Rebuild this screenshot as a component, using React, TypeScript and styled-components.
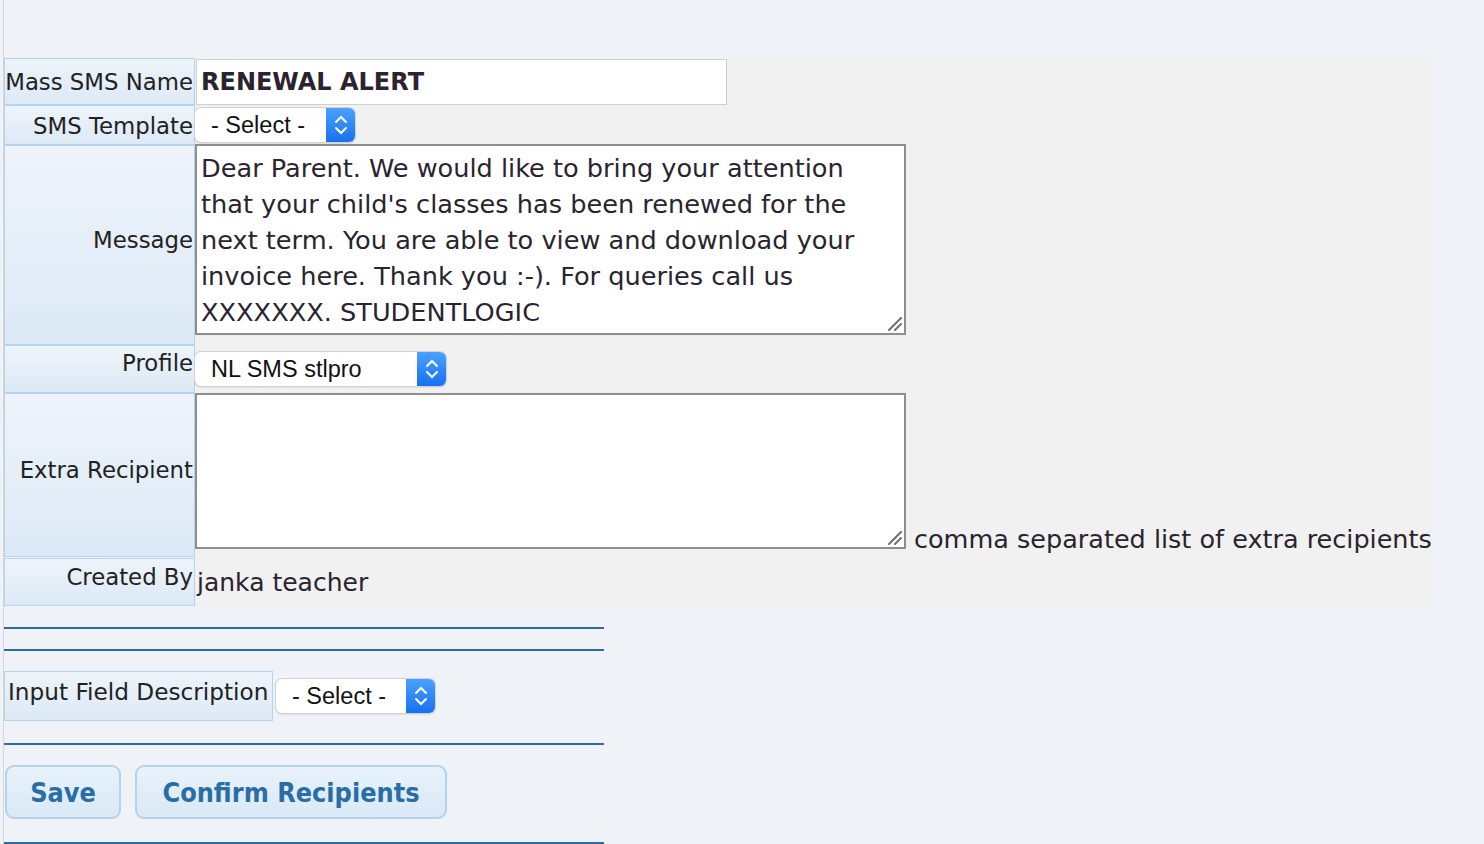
import React from 'react';
import styled, { createGlobalStyle } from 'styled-components';

const GlobalStyle = createGlobalStyle`
  html, body {
    margin: 0;
    padding: 0;
    background: #eff3f7;
  }
  body {
    font-family: "DejaVu Sans", "Liberation Sans", sans-serif;
    color: #2b2330;
  }
`;

const Page = styled.div`
  min-height: 844px;
  margin-left: 3px;
  border-left: 1px solid #d6d6d6;
  padding-top: 58px;
  box-sizing: border-box;
`;

const FormTable = styled.div`
  display: grid;
  grid-template-columns: 191px 1fr;
  width: 1428px;
  background: #f1f1f1;
`;

// $off moves the label text away from the vertical middle (negative = up)
const Label = styled.div<{ $h: number; $off?: number }>`
  height: ${(p) => p.$h}px;
  box-sizing: border-box;
  border: 1px solid #b3d3ee;
  background: linear-gradient(#eef4fa, #dce9f6);
  display: flex;
  align-items: center;
  justify-content: flex-end;
  padding-right: 1px;
  padding-top: ${(p) => Math.max(0, 2 * (p.$off || 0))}px;
  padding-bottom: ${(p) => Math.max(0, -2 * (p.$off || 0))}px;
  font-size: 22.8px;
  color: #222;
  white-space: nowrap;
`;

const WideLabel = styled(Label)`
  width: 269px;
  justify-content: flex-start;
  padding-left: 3px;
  font-size: 23.2px;
`;

const Value = styled.div<{ $align?: string }>`
  display: flex;
  align-items: ${(p) => p.$align || 'center'};
  gap: 8px;
`;

const TextInput = styled.input`
  width: 531px;
  height: 46px;
  box-sizing: border-box;
  margin-left: 1px;
  border: 1px solid #d0d0d0;
  background: #fff;
  padding: 0 4px;
  font-family: "DejaVu Sans", sans-serif;
  font-size: 24px;
  font-weight: bold;
  color: #2b2330;
  outline: none;
`;

const AreaWrap = styled.div`
  position: relative;
  display: flex;
`;

const TextArea = styled.textarea<{ $h: number }>`
  width: 711px;
  height: ${(p) => p.$h}px;
  box-sizing: border-box;
  border: 2px solid #8e8e8e;
  background: #fff;
  padding: 4px 4px;
  font-family: "DejaVu Sans", sans-serif;
  font-size: 25.6px;
  line-height: 36px;
  color: #2b2330;
  resize: none;
  outline: none;
`;

const Grip = styled.svg`
  position: absolute;
  right: 4px;
  bottom: 4px;
  pointer-events: none;
`;

const SelectBox = styled.div<{ $w: number }>`
  width: ${(p) => p.$w}px;
  height: 34px;
  box-sizing: border-box;
  display: flex;
  align-items: stretch;
  background: #fff;
  border-radius: 6px;
  box-shadow: 0 0 0 1px #d2d2d2, 0 1px 2px rgba(0, 0, 0, 0.25);
  overflow: hidden;
  font-family: "Liberation Sans", Arial, sans-serif;
  font-size: 23.5px;
  color: #111;
`;

const SelectText = styled.span`
  flex: 1;
  display: flex;
  align-items: center;
  padding-left: 16px;
  white-space: pre;
`;

const SelectArrow = styled.span`
  width: 29px;
  display: flex;
  align-items: center;
  justify-content: center;
  background: linear-gradient(#4aa1ff, #1771f0);
`;

const Hint = styled.span`
  font-size: 25.5px;
  line-height: 26px;
  padding-bottom: 6px;
  white-space: nowrap;
`;

const Plain = styled.span`
  font-size: 25px;
  padding-left: 2px;
`;

const Rule = styled.hr<{ $top: number }>`
  width: 600px;
  margin: ${(p) => p.$top}px 0 0;
  border: 0;
  border-top: 2px solid #2c6ba4;
`;

const Lower = styled.div`
  display: flex;
  flex-direction: column;
`;

const FieldRow = styled.div`
  display: flex;
  align-items: center;
  gap: 3px;
  margin-top: 20px;
`;

const ButtonRow = styled.div`
  display: flex;
  gap: 14px;
  margin: 20px 0 0 1px;
`;

const Button = styled.button<{ $w: number }>`
  width: ${(p) => p.$w}px;
  height: 54px;
  border: 2px solid #b2d2ee;
  border-radius: 9px;
  background: linear-gradient(#e8f2fb, #d9e9f6);
  font-family: "DejaVu Sans Condensed", "DejaVu Sans", sans-serif;
  font-weight: bold;
  font-size: 26.8px;
  color: #2a6da6;
  cursor: pointer;
`;

const Chevrons = () => (
  <svg width="16" height="26" viewBox="0 0 16 26">
    <path d="M3 10 L8 5 L13 10" fill="none" stroke="#fff" strokeWidth="2" strokeLinecap="round" />
    <path d="M3 16 L8 21 L13 16" fill="none" stroke="#fff" strokeWidth="2" strokeLinecap="round" />
  </svg>
);

const Select = ({ w, text }: { w: number; text: string }) => (
  <SelectBox $w={w}>
    <SelectText>{text}</SelectText>
    <SelectArrow>
      <Chevrons />
    </SelectArrow>
  </SelectBox>
);

const Area = ({ h, value, style }: { h: number; value?: string; style?: React.CSSProperties }) => (
  <AreaWrap style={style}>
    <TextArea $h={h} defaultValue={value} />
    <Grip width="14" height="14" viewBox="0 0 14 14">
      <path d="M1 13 L13 1 M7 13 L13 7" stroke="#6f6f6f" strokeWidth="2" strokeLinecap="round" />
    </Grip>
  </AreaWrap>
);

const message =
  "Dear Parent. We would like to bring your attention\nthat your child's classes has been renewed for the\nnext term. You are able to view and download your\ninvoice here. Thank you :-). For queries call us\nXXXXXXX. STUDENTLOGIC";

export default function App() {
  return (
    <Page>
      <GlobalStyle />
      <FormTable>
        <Label $h={47} $off={0}>Mass SMS Name</Label>
        <Value>
          <TextInput defaultValue="RENEWAL ALERT" />
        </Value>

        <Label $h={40} $off={1}>SMS Template</Label>
        <Value>
          <Select w={160} text="- Select -" />
        </Value>

        <Label $h={200} $off={-5}>Message</Label>
        <Value $align="flex-start">
          <Area h={191} value={message} style={{ marginTop: -1 }} />
        </Value>

        <Label $h={48} $off={-6}>Profile</Label>
        <Value>
          <Select w={251} text="NL SMS stlpro" />
        </Value>

        <Label $h={164} $off={-5}>Extra Recipient</Label>
        <Value $align="flex-end">
          <Area h={156} style={{ marginBottom: 9 }} />
          <Hint>comma separated list of extra recipients</Hint>
        </Value>

        <Label $h={48} $off={-5}>Created By</Label>
        <Value>
          <Plain>janka teacher</Plain>
        </Value>
      </FormTable>

      <Lower>
        <Rule $top={21} />
        <Rule $top={20} />
        <FieldRow>
          <WideLabel $h={50} $off={-5}>
            Input Field Description
          </WideLabel>
          <Select w={159} text="- Select -" />
        </FieldRow>
        <Rule $top={22} />
        <ButtonRow>
          <Button $w={116}>Save</Button>
          <Button $w={312}>Confirm Recipients</Button>
        </ButtonRow>
        <Rule $top={23} />
      </Lower>
    </Page>
  );
}
